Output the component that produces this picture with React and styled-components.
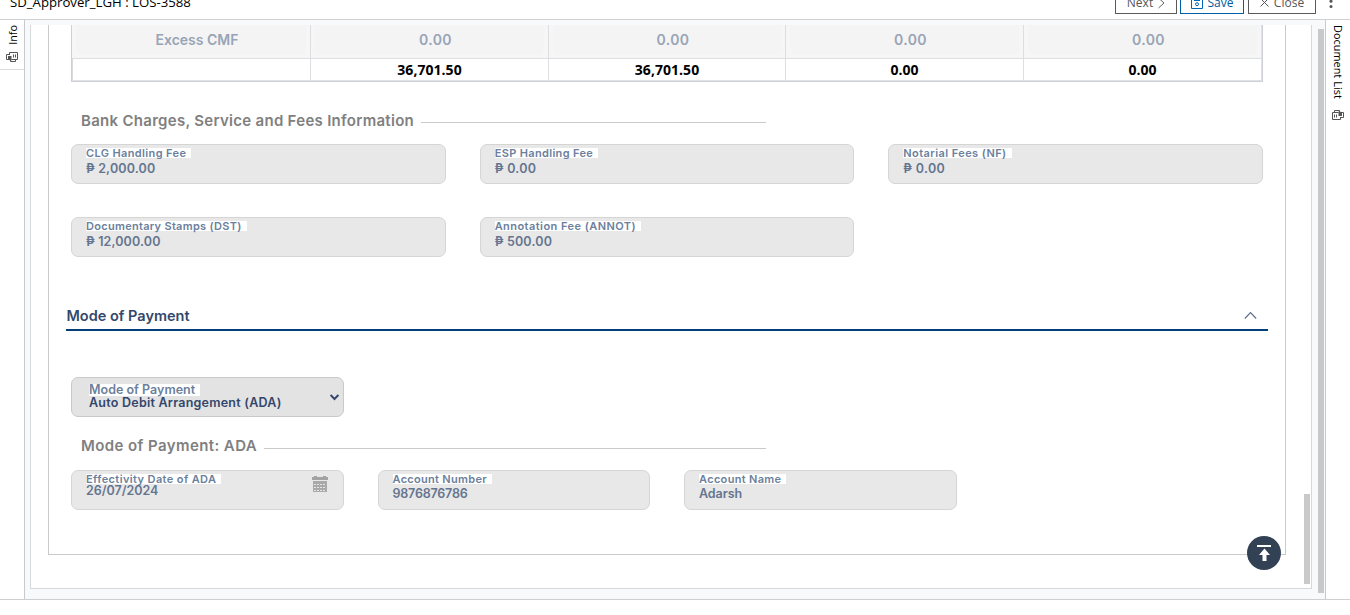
import React from "react";
import styled, { createGlobalStyle } from "styled-components";

const Global = createGlobalStyle`
  * { box-sizing: border-box; }
  body { margin: 0; background: #fff; overflow: hidden; font-family: "Open Sans", "Noto Sans", sans-serif; }
`;

const Page = styled.div`
  height: 600px;
  display: flex;
  flex-direction: column;
  overflow: hidden;
  border-bottom: 1px solid #cfcfcf;
  margin-bottom: 15px;
`;

const Header = styled.header`
  flex: none;
  height: 20px;
  border-bottom: 1px solid #d0d1d2;
  display: flex;
  align-items: flex-start;
  padding-left: 10px;
  overflow: hidden;
`;

const Title = styled.div`
  flex: 1;
  margin-top: -8px;
  font-size: 13.2px;
  line-height: 20px;
  color: #000;
`;

const HeaderButton = styled.button`
  width: ${(p) => p.$width}px;
  height: 26px;
  margin: -12px ${(p) => p.$gap}px 0 0;
  padding: 3px 0 0;
  display: flex;
  align-items: center;
  justify-content: center;
  gap: 5px;
  border: 1px solid ${(p) => (p.$primary ? "#0060a6" : "#5a5a5a")};
  background: #fff;
  color: ${(p) => (p.$primary ? "#005a9e" : "#555")};
  font: 400 12px/20px "Open Sans", sans-serif;
`;

const Kebab = styled.svg`
  flex: none;
  margin-right: 17px;
`;

const Body = styled.div`
  flex: 1;
  min-height: 0;
  display: flex;
`;

const Rail = styled.aside`
  width: 25px;
  display: flex;
  flex-direction: column;
  ${(p) => (p.$side === "left" ? "border-right" : "border-left")}: 1px solid #c9cacb;
`;

const RailTab = styled.div`
  display: flex;
  flex-direction: column;
  align-items: center;
  height: ${(p) => p.$height}px;
  padding-top: ${(p) => p.$top}px;
  gap: ${(p) => p.$gap}px;
  ${(p) => p.$line && "border-bottom: 1px solid #dcdcdc;"}
`;

const RailText = styled.span`
  writing-mode: vertical-rl;
  font-size: 10.8px;
  line-height: 16px;
  letter-spacing: ${(p) => p.$spacing || 0}px;
  color: #000;
  ${(p) => p.$up && "transform: rotate(180deg); margin-left: 1px;"}
`;

const Main = styled.main`
  flex: 1;
  display: flex;
  background: #f8f9fb;
  padding: 5px 1px 10px 5px;
`;

const OuterPanel = styled.div`
  flex: 1;
  display: flex;
  background: #fff;
  border: 1px solid #d6d8da;
  border-top: 0;
  padding: 0 1px 0 17px;
`;

const Card = styled.section`
  width: 1238px;
  height: 530px;
  border: 1px solid #c9cacb;
  border-top: 0;
  padding: 0 17px;
  position: relative;
`;

const ScrollTrack = styled.div`
  width: 6px;
  margin-left: auto;
  padding-top: ${(p) => p.$top}px;
`;

const Thumb = styled.div`
  width: 6px;
  height: ${(p) => p.$height}px;
  background: #c9c9c9;
`;

const OuterScroll = styled(ScrollTrack)`
  margin-left: 6px;
  flex: none;
`;

const Inset = styled.div`
  padding: 0 5px;
`;

const Table = styled.div`
  border: 1px solid #cdd0d4;
  border-top: 0;
  box-shadow: inset -1px -1px 0 #e0e2e5, inset 1px 0 0 #d9dbde;
  height: 57px;
`;

const Row = styled.div`
  display: grid;
  grid-template-columns: 239px 238px 237px 238px 1fr;
  height: ${(p) => p.$height}px;
  ${(p) => p.$line && "border-bottom: 1px solid #dcdee1;"}
`;

const Cell = styled.div`
  display: flex;
  border-right: 1px solid #dcdee1;
  ${(p) => p.$muted && "background: #f6f6f6; padding: 0 4px 3px 4px;"}
  &:last-child { border-right: 0; margin-right: 1px; }
`;

const MutedInput = styled.div`
  flex: 1;
  background: #f4f4f4;
  border-radius: 0 0 6px 6px;
  padding-left: 12px;
  text-align: center;
  font: 600 14px/29px Inter, sans-serif;
  letter-spacing: ${(p) => p.$spacing || 0}px;
  color: #98a4b6;
`;

const Total = styled.div`
  flex: 1;
  text-align: center;
  font: 700 14px/21px "Open Sans", "Noto Sans", sans-serif;
  letter-spacing: 0.05px;
  color: #000;
`;

const Legend = styled.h3`
  margin: ${(p) => p.$top}px 0 0 15px;
  width: 685px;
  height: 22px;
  display: flex;
  align-items: center;
  gap: 7px;
  font: 600 15px/22px Inter, sans-serif;
  letter-spacing: ${(p) => p.$spacing}px;
  color: #808080;
  white-space: nowrap;
  &::after {
    content: "";
    flex: 1;
    height: 1px;
    margin-top: ${(p) => p.$drop}px;
    background: #cacaca;
  }
`;

const Grid = styled.div`
  display: grid;
  grid-template-columns: repeat(${(p) => p.$cols}, 1fr);
  gap: 33px 34px;
  margin-top: ${(p) => p.$top}px;
`;

const FieldBox = styled.div`
  height: 40px;
  border: 1px solid ${(p) => (p.$select ? "#c9c9c9" : "#d5d5d5")};
  border-radius: 7px;
  background: ${(p) => (p.$select ? "#e3e3e3" : "#e8e8e8")};
  padding: ${(p) => (p.$select ? "6px 4px 0 17px" : "3px 15px 0 14px")};
  display: flex;
  justify-content: space-between;
`;

const FieldText = styled.div`
  display: flex;
  flex-direction: column;
  align-items: flex-start;
  white-space: nowrap;
  font-family: Inter, "Open Sans", sans-serif;
  font-weight: 600;
`;

const Label = styled.label`
  background: #fff;
  height: ${(p) => (p.$large ? 12 : 10)}px;
  line-height: ${(p) => (p.$large ? 12 : 10)}px;
  font-size: ${(p) => (p.$large ? 12.5 : 11)}px;
  letter-spacing: ${(p) => p.$spacing}px;
  padding-right: 5px;
  color: #6c7f9c;
`;

const Value = styled.span`
  margin-top: ${(p) => p.$shift}px;
  font-size: 12.5px;
  line-height: 16px;
  letter-spacing: ${(p) => p.$spacing}px;
  color: ${(p) => (p.$dark ? "#33476b" : "#65758f")};
`;

const Section = styled.div`
  margin-top: 48px;
  height: 26px;
  border-bottom: 2px solid #023f7b;
  display: flex;
  justify-content: space-between;
  font: 600 14.5px/22px Inter, sans-serif;
  color: #33476b;
  padding: 0 11px 0 0.5px;
`;

const SectionIcon = styled.svg`
  margin-top: 4px;
`;

const SelectIcon = styled.svg`
  margin-top: 10px;
`;

const CalendarIcon = styled.svg`
  margin-top: 2px;
`;

const TopButton = styled.button`
  position: absolute;
  right: 4px;
  bottom: -16px;
  width: 34px;
  height: 34px;
  border: 0;
  padding: 0;
  border-radius: 50%;
  background: #334155;
  display: flex;
`;

const DocsIcon = styled.svg`
  ${(p) => p.$flip && "transform: rotate(180deg);"}
`;

function Docs({ flip }) {
  return (
    <DocsIcon $flip={flip} width="12" height="11" viewBox="0 0 12 11" fill="none" stroke="#555" strokeWidth="1">
      <path d="M3.5 2.5V.5H11.5V7.5H5.5 M7.5 2.5V5.5 M9.5 2.5V5.5 M9.5 7.5V9.5H4.5V8 M4 2.5H.5V7.5H3" />
      <path d="M2 4H5.5V8.5H4L2 7Z" fill="#555" stroke="none" />
    </DocsIcon>
  );
}

function Calendar() {
  return (
    <CalendarIcon width="16" height="17" viewBox="0 0 16 17">
      <path d="M0 1H2V0H5V1H11V0H14V1H16V4H0Z" fill="#a2a2a2" />
      <path d="M1 5H15V16H1Z" fill="#a9a9a9" />
      <path d="M2 8.5H14M2 11.5H14M2 14.5H14" stroke="#e4e4e4" strokeWidth="1" strokeDasharray="2 1" />
    </CalendarIcon>
  );
}

function Field({ label, ls, value, vs = 0.1, shift = 3, calendar }) {
  return (
    <FieldBox>
      <FieldText>
        <Label $spacing={ls}>{label}</Label>
        <Value $spacing={vs} $shift={shift}>{value}</Value>
      </FieldText>
      {calendar && <Calendar />}
    </FieldBox>
  );
}

const fees = [
  { label: "CLG Handling Fee", ls: 0.37, value: "₱ 2,000.00", vs: 0.15 },
  { label: "ESP Handling Fee", ls: 0.34, value: "₱ 0.00", vs: 0.3 },
  { label: "Notarial Fees (NF)", ls: 0.42, value: "₱ 0.00", vs: 0.3 },
  { label: "Documentary Stamps (DST)", ls: 0.29, value: "₱ 12,000.00", vs: 0.13 },
  { label: "Annotation Fee (ANNOT)", ls: 0.45, value: "₱ 500.00", vs: 0.18 },
];

const account = [
  { label: "Effectivity Date of ADA", ls: 0.39, value: "26/07/2024", vs: 0, shift: -1, calendar: true },
  { label: "Account Number", ls: 0.3, value: "9876876786", vs: -0.2, shift: 2 },
  { label: "Account Name", ls: 0.32, value: "Adarsh", vs: -0.05, shift: 2 },
];

export default function App() {
  return (
    <>
      <Global />
      <Page>
        <Header>
          <Title>SD_Approver_LGH : LOS-3588</Title>
          <HeaderButton $width={62} $gap={3}>
            Next
            <svg width="7" height="12" viewBox="0 0 7 12" fill="none" stroke="#666"><path d="M.5 1 L6 6 L.5 11" /></svg>
          </HeaderButton>
          <HeaderButton $width={64} $gap={4} $primary>
            <svg width="12" height="12" viewBox="0 0 12 12" fill="none" stroke="#0067b8">
              <path d="M.5 .5 H11.5 V11.5 H.5Z M3 3.5 H9" /><circle cx="6" cy="7.2" r="1.5" />
            </svg>
            Save
          </HeaderButton>
          <HeaderButton $width={68} $gap={12}>
            <svg width="9" height="9" viewBox="0 0 9 9" fill="none" stroke="#555"><path d="M.5 .5 L8.5 8.5 M8.5 .5 L.5 8.5" /></svg>
            Close
          </HeaderButton>
          <Kebab width="5" height="9" viewBox="0 0 5 9" fill="#555">
            <circle cx="3" cy="1.2" r="1.5" /><circle cx="3" cy="6.4" r="1.5" />
          </Kebab>
        </Header>
        <Body>
          <Rail $side="left">
            <RailTab $height={50} $top={5} $gap={7} $line>
              <RailText $up>Info</RailText>
              <Docs />
            </RailTab>
          </Rail>
          <Main>
            <OuterPanel>
              <Card>
                <Inset>
                  <Table>
                    <Row $height={34} $line>
                      <Cell $muted><MutedInput>Excess CMF</MutedInput></Cell>
                      {[1, 2, 3, 4].map((n) => (
                        <Cell $muted key={n}><MutedInput $spacing={0.4}>0.00</MutedInput></Cell>
                      ))}
                    </Row>
                    <Row $height={22}>
                      {["", "36,701.50", "36,701.50", "0.00", "0.00"].map((t, i) => (
                        <Cell key={i}><Total>{t}</Total></Cell>
                      ))}
                    </Row>
                  </Table>
                </Inset>
                <Legend $top={28} $drop={2} $spacing={0.29}>Bank Charges, Service and Fees Information</Legend>
                <Inset>
                  <Grid $cols={3} $top={12}>
                    {fees.map((f) => <Field key={f.label} {...f} />)}
                  </Grid>
                </Inset>
                <Section>
                  Mode of Payment
                  <SectionIcon width="13" height="13" viewBox="0 0 13 13" fill="none" stroke="#5b6b88" strokeWidth="1.1">
                    <path d="M.8 9.5 L6.5 3.5 L12.2 9.5" />
                  </SectionIcon>
                </Section>
                <Inset>
                  <Grid $cols={4} $top={46}>
                    <FieldBox $select>
                      <FieldText>
                        <Label $large $spacing={0}>Mode of Payment</Label>
                        <Value $dark $spacing={0.24} $shift={-1}>Auto Debit Arrangement (ADA)</Value>
                      </FieldText>
                      <SelectIcon width="9" height="7" viewBox="0 0 9 7" fill="none" stroke="#33476b" strokeWidth="2">
                        <path d="M.6 1 L4.5 5 L8.4 1" />
                      </SelectIcon>
                    </FieldBox>
                  </Grid>
                </Inset>
                <Legend $top={18} $drop={4} $spacing={0.41}>Mode of Payment: ADA</Legend>
                <Inset>
                  <Grid $cols={4} $top={13}>
                    {account.map((f) => <Field key={f.label} {...f} />)}
                  </Grid>
                </Inset>
                <TopButton aria-label="Back to top">
                  <svg width="34" height="34" viewBox="0 0 34 34" fill="#fff">
                    <path d="M10 9 H24 V11 H10Z M17.5 12.5 L23 19 H19.5 V25 H15.5 V19 H12Z" />
                  </svg>
                </TopButton>
              </Card>
              <ScrollTrack $top={469}><Thumb $height={90} /></ScrollTrack>
            </OuterPanel>
            <OuterScroll $top={4}><Thumb $height={564} /></OuterScroll>
          </Main>
          <Rail $side="right">
            <RailTab $height={110} $top={5} $gap={10}>
              <RailText $spacing={0.08}>Document List</RailText>
              <Docs flip />
            </RailTab>
          </Rail>
        </Body>
      </Page>
    </>
  );
}
